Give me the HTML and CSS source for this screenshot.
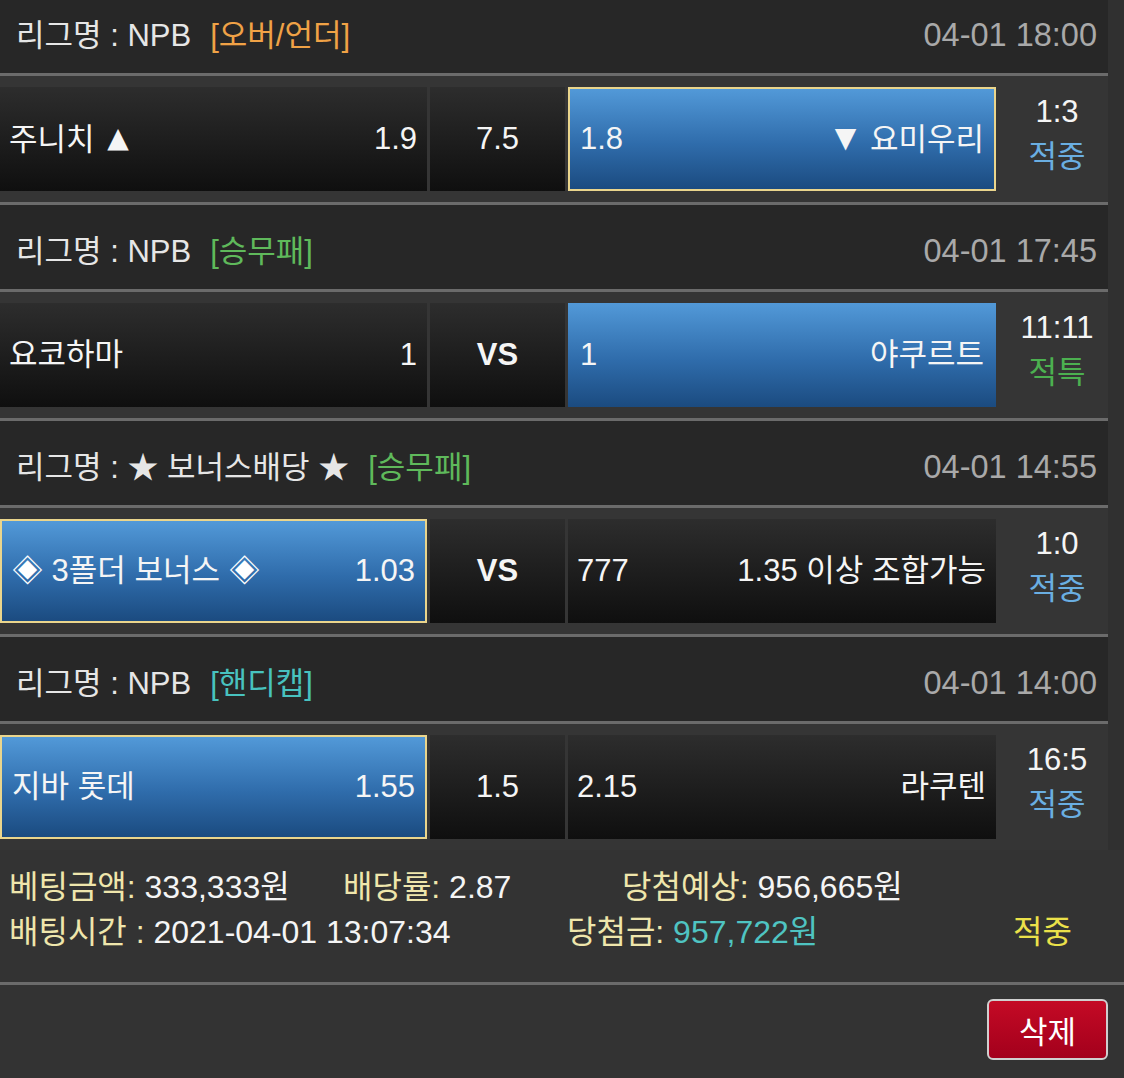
FILE: index.html
```html
<!DOCTYPE html>
<html lang="ko">
<head>
<meta charset="utf-8">
<title>배팅내역</title>
<link rel="stylesheet" href="styles.css">
</head>
<body>
<div class="list">
  <section class="match">
    <div class="league">
      <span class="name">리그명 : NPB</span>
      <span class="type orange">[오버/언더]</span>
      <span class="date">04-01 18:00</span>
    </div>
    <div class="odds">
      <div class="cell"><span>주니치 <span class="tri up">▲</span></span><span>1.9</span></div>
      <div class="cell mid">7.5</div>
      <div class="cell picked ring"><span>1.8</span><span><span class="tri down">▼</span> 요미우리</span></div>
      <div class="result"><span class="score">1:3</span><span class="st hit">적중</span></div>
    </div>
  </section>
  <section class="match">
    <div class="league">
      <span class="name">리그명 : NPB</span>
      <span class="type green">[승무패]</span>
      <span class="date">04-01 17:45</span>
    </div>
    <div class="odds">
      <div class="cell"><span>요코하마</span><span>1</span></div>
      <div class="cell mid vs">VS</div>
      <div class="cell picked"><span>1</span><span>야쿠르트</span></div>
      <div class="result"><span class="score">11:11</span><span class="st special">적특</span></div>
    </div>
  </section>
  <section class="match">
    <div class="league">
      <span class="name">리그명 : ★ 보너스배당 ★</span>
      <span class="type green">[승무패]</span>
      <span class="date">04-01 14:55</span>
    </div>
    <div class="odds">
      <div class="cell picked ring"><span><span class="dia">◈</span> 3폴더 보너스 <span class="dia">◈</span></span><span>1.03</span></div>
      <div class="cell mid vs">VS</div>
      <div class="cell"><span>777</span><span>1.35 이상 조합가능</span></div>
      <div class="result"><span class="score">1:0</span><span class="st hit">적중</span></div>
    </div>
  </section>
  <section class="match">
    <div class="league">
      <span class="name">리그명 : NPB</span>
      <span class="type teal">[핸디캡]</span>
      <span class="date">04-01 14:00</span>
    </div>
    <div class="odds">
      <div class="cell picked ring"><span>지바 롯데</span><span>1.55</span></div>
      <div class="cell mid">1.5</div>
      <div class="cell"><span>2.15</span><span>라쿠텐</span></div>
      <div class="result"><span class="score">16:5</span><span class="st hit">적중</span></div>
    </div>
  </section>
</div>
<div class="summary">
  <div class="line first">
    <span><span class="lbl">베팅금액:</span> 333,333원</span>
    <span><span class="lbl">배당률:</span> 2.87</span>
    <span><span class="lbl">당첨예상:</span> 956,665원</span>
  </div>
  <div class="line second">
    <span><span class="lbl">배팅시간 :</span> 2021-04-01 13:07:34</span>
    <span><span class="lbl">당첨금:</span> <span class="won">957,722원</span></span>
    <span class="win">적중</span>
  </div>
</div>
<div class="actions">
  <button class="delete" type="button">삭제</button>
</div>
</body>
</html>
```
FILE: styles.css
```css
html, body {
  margin: 0;
  padding: 0;
}
body {
  background: #303030;
  color: #f2f2f2;
  font-family: "Liberation Sans", "Noto Sans CJK KR", sans-serif;
  font-size: 31px;
  width: 1124px;
  height: 1078px;
  overflow: hidden;
}
.list {
  width: 1108px;
  margin-top: -11px;
}
.match {
  background: #353535;
}
.match + .match {
  border-top: 3px solid #6b6b6b;
}
.league {
  box-sizing: border-box;
  height: 87px;
  display: flex;
  align-items: baseline;
  padding: 16px 11px 0 16px;
  line-height: 60px;
  background: #272727;
  border-bottom: 3px solid #6b6b6b;
  color: #e6e6e6;
  white-space: nowrap;
}
.type {
  margin-left: 19px;
}
.orange { color: #f0a246; }
.green { color: #5fb95b; }
.teal { color: #48c2bf; }
.date {
  margin-left: auto;
  color: #a9a9a9;
  font-size: 32.5px;
}
.odds {
  display: grid;
  grid-template-columns: 427px 135px 428px 1fr;
  column-gap: 3px;
  padding: 11px 0;
}
.cell {
  box-sizing: border-box;
  height: 104px;
  display: flex;
  align-items: center;
  justify-content: space-between;
  padding: 0 10px 0 9px;
  line-height: 36px;
  background: linear-gradient(#2d2d2d, #0f0f0f);
  color: #f5f5f5;
  white-space: nowrap;
}
.cell.mid {
  justify-content: center;
  padding: 0;
}
.cell.vs {
  font-weight: bold;
}
.cell.picked {
  background: linear-gradient(#5299d8, #2f6cab 55%, #1b4b80);
  padding: 0 12px;
}
.cell.ring {
  border: 2px solid #ead58c;
  padding: 0 10px;
}
.tri {
  font-family: "DejaVu Sans", sans-serif;
  font-size: 28px;
  vertical-align: 3px;
}
.tri.up {
  margin-left: 4px;
}
.tri.down {
  margin-right: 5px;
}
.dia {
  color: #ffffff;
}
.result {
  display: flex;
  flex-direction: column;
  align-items: center;
  justify-content: center;
  padding: 0 0 11px 7px;
  line-height: 45px;
}
.score {
  color: #f5f5f5;
}
.st.hit { color: #6aaee2; }
.st.special { color: #4cb050; }
.summary {
  background: #333333;
  padding: 15px 0 27px 9px;
  border-bottom: 3px solid #6b6b6b;
  line-height: 45px;
  font-size: 32px;
  color: #f5f5f5;
}
.line {
  display: grid;
  white-space: nowrap;
}
.line.first {
  grid-template-columns: 334px 279px auto;
}
.line.second {
  grid-template-columns: 558px 446px auto;
}
.lbl {
  color: #efe6ac;
}
.won {
  color: #4fc4c2;
}
.win {
  color: #ebe14a;
}
.actions {
  background: #333333;
  display: flex;
  justify-content: flex-end;
  padding: 14px 16px 0 0;
  height: 92px;
}
.delete {
  width: 121px;
  height: 61px;
  border: 2px solid #cfcfcf;
  border-radius: 6px;
  background: linear-gradient(#c40a25, #a3001c);
  color: #ffffff;
  font-family: "Liberation Sans", "Noto Sans CJK KR", sans-serif;
  font-size: 31px;
  padding: 0;
}
```
